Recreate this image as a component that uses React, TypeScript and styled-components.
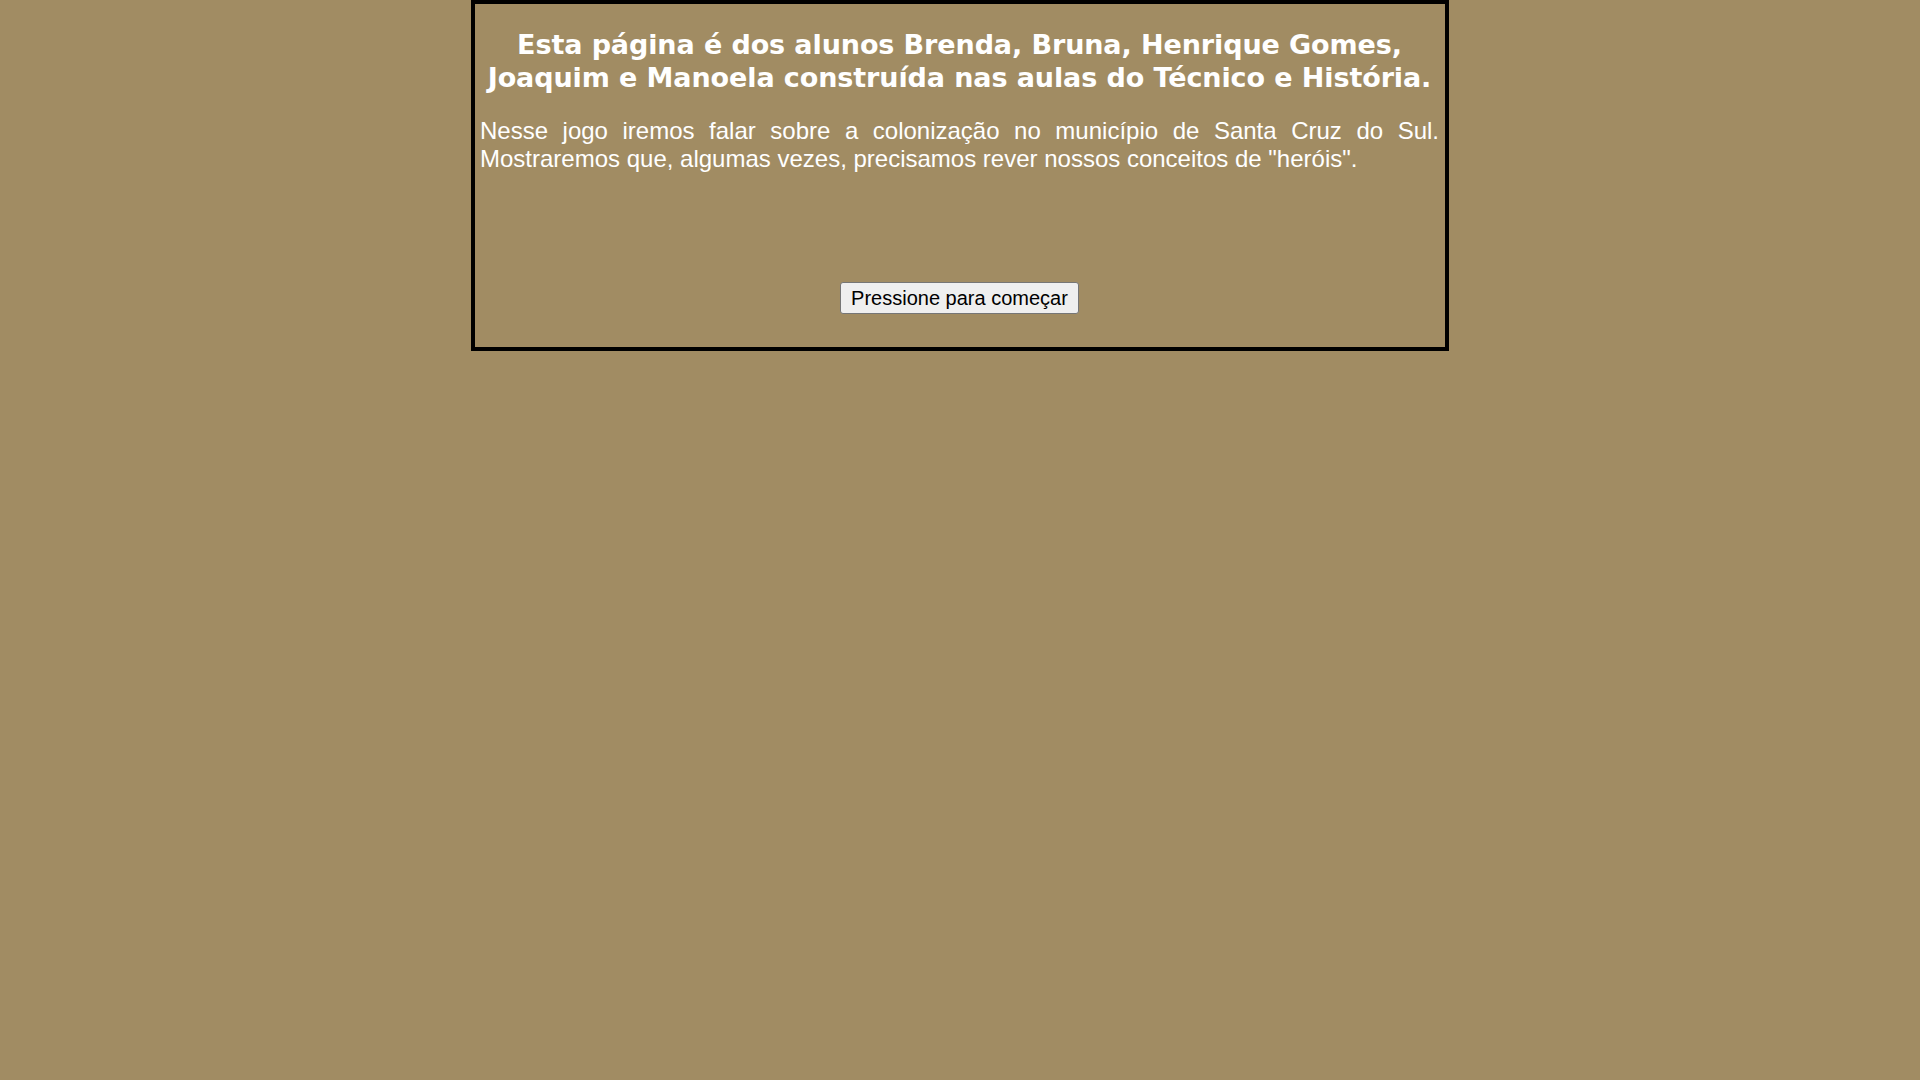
import React from 'react'
import styled, { createGlobalStyle } from 'styled-components'

const GlobalStyle = createGlobalStyle`
  html, body {
    margin: 0;
    padding: 0;
    background: #a18c63;
  }
`

const Frame = styled.div`
  width: 959px;
  margin: 0 auto;
  border: 4px solid #000;
  box-sizing: content-box;
  display: flex;
  flex-direction: column;
  align-items: stretch;
  padding: 24px 6px 33px 5px;
`

const Title = styled.h1`
  margin: 0;
  font-family: Verdana, "DejaVu Sans", sans-serif;
  font-weight: bold;
  font-size: 27px;
  line-height: 33px;
  letter-spacing: -0.1px;
  color: #fff;
  text-align: center;
`

const Intro = styled.p`
  margin: 23px 0 0;
  font-family: Arial, "Liberation Sans", sans-serif;
  font-size: 24px;
  line-height: 28px;
  color: #fff;
  text-align: justify;
`

const Stage = styled.div`
  height: 109px;
`

const StartButton = styled.button`
  align-self: center;
  font-family: Arial, "Liberation Sans", sans-serif;
  font-size: 20px;
  line-height: 23px;
  color: #000;
  background: #efefef;
  border: 1px solid #767676;
  border-radius: 3px;
  padding: 4px 10.5px 3px;
  cursor: pointer;
`

const App = () => {
  return (
    <>
      <GlobalStyle />
      <Frame>
        <Title>
          Esta página é dos alunos Brenda, Bruna, Henrique Gomes, Joaquim e Manoela construída nas aulas do Técnico e História.
        </Title>
        <Intro>
          Nesse jogo iremos falar sobre a colonização no município de Santa Cruz do Sul. Mostraremos que, algumas vezes, precisamos rever nossos conceitos de "heróis".
        </Intro>
        <Stage />
        <StartButton>Pressione para começar</StartButton>
      </Frame>
    </>
  )
}

export default App
